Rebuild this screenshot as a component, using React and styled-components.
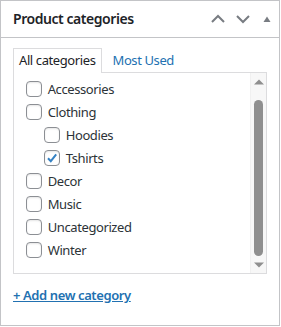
import React from "react";
import styled, { createGlobalStyle } from "styled-components";

const GlobalStyle = createGlobalStyle`
  body {
    margin: 0;
    background: #fff;
    font-family: "Noto Sans", "Open Sans", sans-serif;
    color: #1d2327;
    letter-spacing: -0.4px;
  }
`;

const CATEGORIES = [
  { id: 1, name: "Accessories" },
  {
    id: 2,
    name: "Clothing",
    children: [
      { id: 3, name: "Hoodies" },
      { id: 4, name: "Tshirts", checked: true },
    ],
  },
  { id: 5, name: "Decor" },
  { id: 6, name: "Music" },
  { id: 7, name: "Uncategorized" },
  { id: 8, name: "Winter" },
];

const Postbox = styled.div`
  width: 278px;
  border: 1px solid #c3c4c7;
  background: #fff;
`;

const Header = styled.div`
  display: flex;
  align-items: center;
  justify-content: space-between;
  height: 36px;
  padding: 0 0 0 12px;
  border-bottom: 1px solid #c3c4c7;
`;

const Title = styled.h2`
  margin: 0;
  font-size: 14px;
  font-weight: 600;
  line-height: 1.4;
  letter-spacing: -0.45px;
`;

const Handles = styled.div`
  display: flex;
  align-items: center;
`;

const HandleButton = styled.button`
  display: flex;
  align-items: center;
  justify-content: center;
  width: ${(p) => p.$w || 25}px;
  height: 36px;
  padding: 0;
  border: 0;
  background: none;
  color: #787c82;
`;

const Inside = styled.div`
  padding: 10px 12px 20px;
`;

const Tabs = styled.ul`
  display: flex;
  align-items: flex-end;
  margin: 0;
  padding: 0;
  list-style: none;
  font-size: 13px;
`;

const Tab = styled.li`
  padding: 3px 5px 5px;
  margin-right: 5px;
  margin-bottom: -1px;
  line-height: 16px;
  border: 1px solid ${(p) => (p.$active ? "#dcdcde" : "transparent")};
  border-bottom: 0;
  background: ${(p) => (p.$active ? "#fff" : "transparent")};
  position: relative;
  z-index: 1;

  a {
    color: ${(p) => (p.$active ? "#1d2327" : "#2271b1")};
    text-decoration: none;
  }
`;

const Panel = styled.div`
  display: flex;
  height: 200px;
  border: 1px solid #dcdcde;
  background: #fff;
`;

const ListArea = styled.div`
  flex: 1;
  overflow: hidden;
  padding: 0 11.7px;
`;

const ScrollBar = styled.div`
  display: flex;
  flex-direction: column;
  align-items: center;
  flex: none;
  width: 15px;
  background: #f7f7f7;
  border-left: 1px solid #f0f0f0;
`;

const ScrollArrow = styled.div`
  display: flex;
  align-items: center;
  justify-content: center;
  height: ${(p) => p.$h}px;
  width: 100%;
  color: #8f8f8f;
`;

const Thumb = styled.div`
  width: 9px;
  height: 156px;
  margin: 9px 0 1px;
  border-radius: 5px;
  background: #8f8f8f;
`;

const CheckList = styled.ul`
  margin: ${(p) => (p.$nested ? "0 0 0 18px" : "4px 0 0")};
  padding: 0;
  list-style: none;
`;

const Item = styled.li`
  margin: 0;
  padding: 0;
`;

const Label = styled.label`
  display: flex;
  align-items: center;
  gap: 6px;
  height: 23px;
  font-size: 13px;
  color: #2c3338;
`;

const Box = styled.span`
  display: flex;
  align-items: center;
  justify-content: center;
  flex: none;
  width: 14px;
  height: 14px;
  border: 1px solid #8c8f94;
  border-radius: 4px;
  background: #fff;
  box-shadow: inset 0 1px 2px rgba(0, 0, 0, 0.1);
  color: #3582c4;
`;

const AddLink = styled.a`
  display: inline-block;
  margin-top: 12px;
  font-size: 13px;
  font-weight: 600;
  color: #2271b1;
  text-decoration: underline;
`;

const Chevron = ({ up }) => (
  <svg width="14" height="14" viewBox="0 0 14 14" fill="none">
    <path
      d={up ? "M1 10l6-6 6 6" : "M1 4l6 6 6-6"}
      stroke="currentColor"
      strokeWidth="2"
    />
  </svg>
);

const Triangle = ({ down }) => (
  <svg width="10" height="10" viewBox="0 0 10 10">
    <path
      d={down ? "M0 2.5L5 7.5 10 2.5z" : "M0 7.5L5 2.5 10 7.5z"}
      fill="currentColor"
    />
  </svg>
);

const HandleTriangle = () => (
  <svg width="10" height="10" viewBox="0 0 10 10">
    <path d="M1.5 8L5 2.5 8.5 8z" fill="currentColor" />
  </svg>
);

const Check = () => (
  <svg width="14" height="14" viewBox="0 0 14 14" fill="none">
    <path d="M3 7.2l2.8 3L11.2 3.4" stroke="currentColor" strokeWidth="2" />
  </svg>
);

const CategoryList = ({ items, nested }) => (
  <CheckList $nested={nested}>
    {items.map((cat) => (
      <Item key={cat.id}>
        <Label>
          <Box>{cat.checked && <Check />}</Box>
          {cat.name}
        </Label>
        {cat.children && <CategoryList items={cat.children} nested />}
      </Item>
    ))}
  </CheckList>
);

export default function App() {
  return (
    <>
      <GlobalStyle />
      <Postbox>
        <Header>
          <Title>Product categories</Title>
          <Handles>
            <HandleButton>
              <Chevron up />
            </HandleButton>
            <HandleButton>
              <Chevron />
            </HandleButton>
            <HandleButton $w={24}>
              <HandleTriangle />
            </HandleButton>
          </Handles>
        </Header>
        <Inside>
          <Tabs>
            <Tab $active>
              <a href="#all">All categories</a>
            </Tab>
            <Tab>
              <a href="#pop">Most Used</a>
            </Tab>
          </Tabs>
          <Panel>
            <ListArea>
              <CategoryList items={CATEGORIES} />
            </ListArea>
            <ScrollBar>
              <ScrollArrow $h={18}>
                <Triangle />
              </ScrollArrow>
              <Thumb />
              <ScrollArrow $h={16}>
                <Triangle down />
              </ScrollArrow>
            </ScrollBar>
          </Panel>
          <AddLink href="#add">+ Add new category</AddLink>
        </Inside>
      </Postbox>
    </>
  );
}
